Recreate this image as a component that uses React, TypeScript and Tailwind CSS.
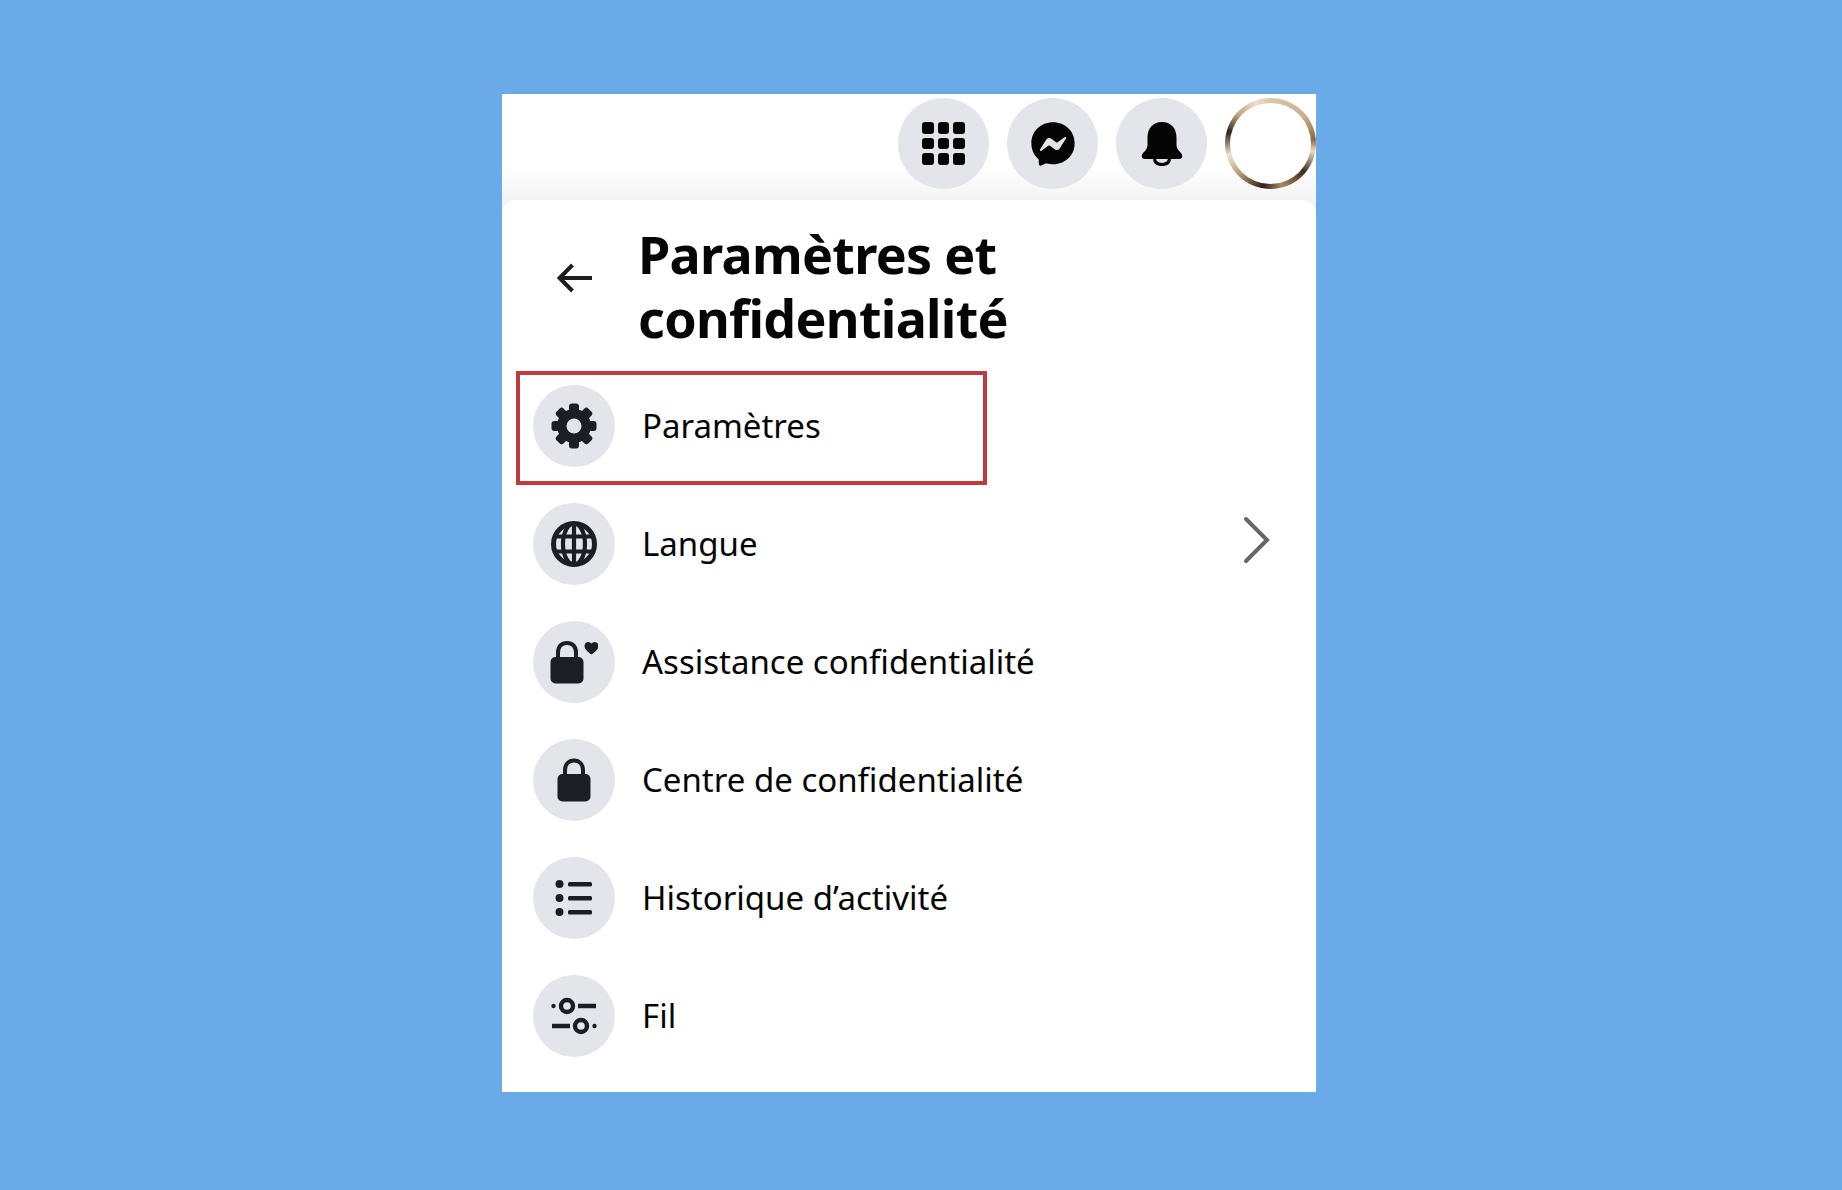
import { ReactNode } from "react";
import { RiMessengerFill } from "react-icons/ri";

function GridIcon() {
  return (
    <div className="grid grid-cols-3 gap-[4px] w-[43px] h-[43px]">
      {Array.from({ length: 9 }).map((_, i) => (
        <span key={i} className="rounded-[3px] bg-[#050505]" />
      ))}
    </div>
  );
}

function BellIcon() {
  return (
    <svg viewBox="0 0 42 44" className="w-[42px] h-[44px]" fill="#050505">
      <path d="M21 0C11.5 0 6.5 7 6.5 15.5V23c0 3-1.5 5-4.5 8-2.2 2.2-1.5 6 2 6h34c3.5 0 4.2-3.8 2-6-3-3-4.500-5-4.500-8v-7.500C35.500 7 30.500 0 21 0Z" />
      <path
        d="M13.500 37c.5 4 3.500 5.500 7.500 5.500s7-1.500 7.500-5.500"
        fill="none"
        stroke="#050505"
        strokeWidth="3.200"
      />
    </svg>
  );
}

function GearIcon() {
  return (
    <svg viewBox="0 0 46 46" className="w-[46px] h-[46px]" fill="#1c1e26">
      {[0, 45, 90, 135].map((deg) => (
        <rect key={deg} x="18" y="0.500" width="10" height="45" rx="3" transform={`rotate(${deg} 23 23)`} />
      ))}
      <circle cx="23" cy="23" r="17" />
      <circle cx="23" cy="23" r="7.500" fill="#e4e5ea" />
    </svg>
  );
}

function GlobeIcon() {
  return (
    <svg viewBox="0 0 46 46" className="w-[46px] h-[46px]" fill="none" stroke="#1c1e26" strokeWidth="4.200">
      <circle cx="23" cy="23" r="20.500" fill="#e4e5ea" strokeWidth="5" />
      <ellipse cx="23" cy="23" rx="11" ry="20.500" />
      <path d="M23 3v40M4 15.500h38M4 30.500h38" />
    </svg>
  );
}

function LockHeartIcon() {
  return (
    <svg viewBox="0 0 48 44" className="w-[48px] h-[44px]" fill="#1c1e26">
      <path
        d="M8 19v-6.500C8 6.500 11.500 3 17 3s9 3.500 9 9.500V19"
        fill="none"
        stroke="#1c1e26"
        strokeWidth="4"
      />
      <rect x="0.500" y="17" width="33" height="26.500" rx="5" />
      <path d="M41.500 14.500c-3-2.300-7-4.800-7-8.500 0-2.500 1.800-4 3.800-4 1.300 0 2.500.7 3.200 1.800C42.200 2.700 43.400 2 44.700 2c2 0 3.800 1.500 3.800 4 0 3.700-4 6.200-7 8.500Z" />
    </svg>
  );
}

function LockIcon() {
  return (
    <svg viewBox="0 0 34 44" className="w-[34px] h-[44px]" fill="#1c1e26">
      <path
        d="M8 19v-6.500C8 6.500 11.500 2.500 17 2.500s9 4 9 10V19"
        fill="none"
        stroke="#1c1e26"
        strokeWidth="4"
      />
      <rect x="0.500" y="16" width="33" height="27.500" rx="5" />
    </svg>
  );
}

function ListIcon() {
  return (
    <svg viewBox="0 0 38 38" className="w-[38px] h-[38px]" fill="#1c1e26">
      <circle cx="4.500" cy="5" r="4" />
      <circle cx="4.500" cy="19" r="4" />
      <circle cx="4.500" cy="33" r="4" />
      <rect x="13" y="3" width="24" height="4.400" rx="1.500" />
      <rect x="13" y="17" width="24" height="4.400" rx="1.500" />
      <rect x="13" y="31" width="24" height="4.400" rx="1.500" />
    </svg>
  );
}

function SlidersIcon() {
  return (
    <svg viewBox="0 0 46 38" className="w-[46px] h-[38px]" fill="none" stroke="#1c1e26" strokeWidth="4.400">
      <circle cx="16" cy="9" r="6" />
      <circle cx="30" cy="29" r="6" />
      <path d="M27 9h18M1 29h18" />
      <circle cx="2.500" cy="9" r="2.200" fill="#1c1e26" stroke="none" />
      <circle cx="43.500" cy="29" r="2.200" fill="#1c1e26" stroke="none" />
    </svg>
  );
}

function TopButton({ children }: { children: ReactNode }) {
  return (
    <div className="w-[91px] h-[91px] rounded-full bg-[#e4e5ea] flex items-center justify-center">
      {children}
    </div>
  );
}

const rows: { label: string; icon: ReactNode; more?: boolean }[] = [
  { label: "Paramètres", icon: <GearIcon /> },
  { label: "Langue", icon: <GlobeIcon />, more: true },
  { label: "Assistance confidentialité", icon: <LockHeartIcon /> },
  { label: "Centre de confidentialité", icon: <LockIcon /> },
  { label: "Historique d’activité", icon: <ListIcon /> },
  { label: "Fil", icon: <SlidersIcon /> },
];

export default function App() {
  return (
    <div className="min-h-[1190px] bg-[#6aaae8] pt-[94px] pl-[502px] font-['Noto_Sans',sans-serif] text-[#050505]">
      <div className="w-[814px] h-[998px] bg-white relative">
        {/* gradient runs under the panel so its rounded corners show */}
        <header className="h-[120px] pt-[4px] flex justify-end gap-[18px] bg-gradient-to-b from-white from-60% to-[#f4f4f5] to-[88%]">
          <TopButton>
            <GridIcon />
          </TopButton>
          <TopButton>
            <RiMessengerFill className="w-[52px] h-[52px] text-[#050505]" />
          </TopButton>
          <TopButton>
            <BellIcon />
          </TopButton>
          <div className="w-[91px] h-[91px] rounded-full bg-[conic-gradient(#d9c7a8_0deg,#c9b48f_50deg,#8a6a45_85deg,#e9dcc6_100deg,#3c2c1e_130deg,#a78a62_165deg,#2b2019_190deg,#b49a75_225deg,#f0e4d0_255deg,#2f251c_285deg,#b9a27f_310deg,#ece0ca_340deg,#d9c7a8_360deg)] flex items-center justify-center">
            <div className="w-[81px] h-[81px] rounded-full bg-white" />
          </div>
        </header>

        <main className="-mt-[14px] relative rounded-t-[14px] bg-white">
          <div className="h-[167px] flex items-start pl-[55px]">
            <svg viewBox="0 0 36 30" className="w-[36px] h-[30px] mt-[63px]" fill="none" stroke="#1c1e21" strokeWidth="4">
              <path d="M35 15H3M15.500 2 2.500 15l13 13" />
            </svg>
            <h1 className="ml-[45px] mt-[22px] text-[52px] leading-[64px] font-bold tracking-[-0.7px] w-[560px]">
              Paramètres et
              <br />
              confidentialité
            </h1>
          </div>

          <ul>
            {rows.map((row) => (
              <li key={row.label} className="h-[118px] flex items-center pl-[31px] pr-[45px]">
                <div className="w-[82px] h-[82px] rounded-full bg-[#e4e5ea] flex items-center justify-center shrink-0">
                  {row.icon}
                </div>
                <span className="ml-[27px] text-[33px] flex-1">{row.label}</span>
                {row.more && (
                  <svg viewBox="0 0 28 48" className="w-[28px] h-[48px] mb-[8px]" fill="none" stroke="#666" strokeWidth="4" strokeLinecap="round">
                    <path d="M3 3l21 21L3 45" />
                  </svg>
                )}
              </li>
            ))}
          </ul>
        </main>

        <div className="absolute left-[14px] top-[277px] w-[471px] h-[114px] border-[4px] border-[#c0393d]" />
      </div>
    </div>
  );
}
